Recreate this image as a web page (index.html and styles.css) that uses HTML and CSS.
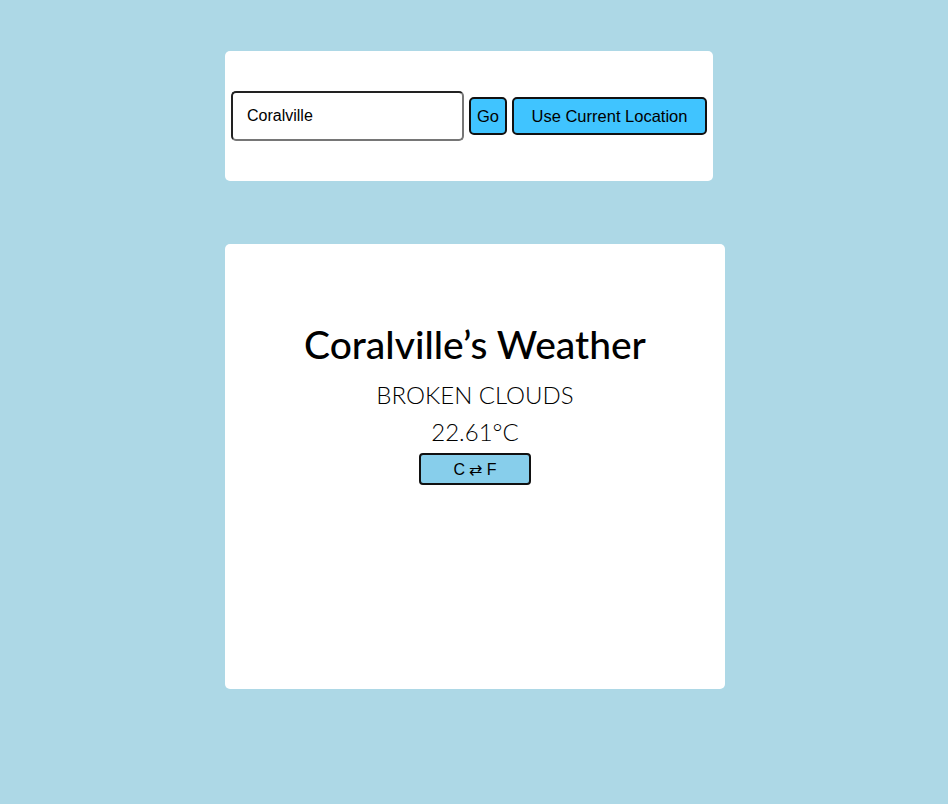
FILE: index.html
```html
<!DOCTYPE html>
<html lang="en">
<head>
<meta charset="utf-8">
<title>Weather</title>
<link rel="stylesheet" href="styles.css">
</head>
<body>
<main class="page">
  <form class="search-card">
    <input class="city-input" type="text" value="Coralville">
    <button class="btn btn-go" type="button">Go</button>
    <button class="btn btn-loc" type="button">Use Current Location</button>
  </form>
  <section class="weather-card">
    <h1 class="city-title">Coralville’s Weather</h1>
    <p class="desc">BROKEN CLOUDS</p>
    <p class="temp">22.61°C</p>
    <button class="btn-toggle" type="button">C ⇄ F</button>
  </section>
</main>
</body>
</html>
```
FILE: styles.css
```css
html, body {
  margin: 0;
  padding: 0;
}
body {
  background: #add8e6;
  font-family: "Liberation Sans", Arial, sans-serif;
  min-height: 804px;
}
.page {
  width: 500px;
  margin: 0 0 0 225px;
  padding-top: 51px;
  display: flex;
  flex-direction: column;
  align-items: flex-start;
}
.search-card {
  background: #fff;
  border-radius: 5px;
  height: 130px;
  box-sizing: border-box;
  padding: 0 6px;
  display: flex;
  align-items: center;
  gap: 5px;
  margin: 0;
}
.city-input {
  width: 233px;
  height: 50px;
  box-sizing: border-box;
  border: 2px solid #767676;
  border-color: #222 #767676 #767676 #222;
  border-radius: 5px;
  padding: 0 14px;
  font-family: "Liberation Sans", Arial, sans-serif;
  font-size: 16px;
  color: #000;
  outline: none;
}
.btn {
  height: 38px;
  box-sizing: border-box;
  background: #40c4ff;
  border: 2px solid #111;
  border-radius: 5px;
  font-family: "Liberation Sans", Arial, sans-serif;
  font-size: 16.5px;
  color: #000;
  padding: 0;
}
.btn-go { width: 38px; }
.btn-loc { width: 195px; }
.weather-card {
  margin-top: 63px;
  width: 500px;
  height: 445px;
  box-sizing: border-box;
  background: #fff;
  border-radius: 5px;
  display: flex;
  flex-direction: column;
  align-items: center;
  padding-top: 76px;
}
.city-title {
  margin: 0;
  font-family: "Lato", sans-serif;
  font-weight: 500;
  font-size: 39px;
  line-height: 48px;
  color: #000;
}
.desc, .temp {
  margin: 0;
  font-family: "Lato", sans-serif;
  font-weight: 300;
  font-size: 24px;
  line-height: 37px;
  color: #000;
}
.desc { margin-top: 8px; }
.btn-toggle {
  margin-top: 3px;
  width: 112px;
  height: 32px;
  box-sizing: border-box;
  background: #87ceeb;
  border: 2px solid #111;
  border-radius: 4px;
  font-family: "Liberation Sans", Arial, sans-serif;
  font-size: 16px;
  color: #000;
  padding: 0;
}
```
